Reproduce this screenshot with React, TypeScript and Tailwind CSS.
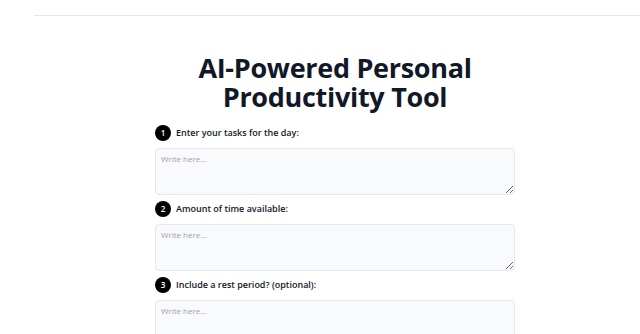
const steps = [
  "Enter your tasks for the day:",
  "Amount of time available:",
  "Include a rest period? (optional):",
];

export default function App() {
  return (
    <div
      className="min-h-screen bg-white text-[#111827]"
      style={{ fontFamily: '"Open Sans", "Noto Sans", sans-serif' }}
    >
      <header className="ml-[34px] h-[16px] border-b border-gray-200" />
      <main className="pl-[30px]">
        <div className="mx-auto w-[360px] pt-[37px]">
          <h1 className="text-center text-[27px] font-bold leading-[29px] tracking-[-0.3px] text-[#111827]">
            AI-Powered Personal
            <br />
            Productivity Tool
          </h1>
          <form className="mt-[14px] flex flex-col gap-[6px]">
            {steps.map((label, i) => (
              <div key={label} className="flex flex-col gap-[7px]">
                <div className="flex items-center gap-[5px]">
                  <span className="flex h-[16px] w-[16px] items-center justify-center rounded-full bg-black text-[8px] font-semibold text-white">
                    {i + 1}
                  </span>
                  <span className="text-[9px] font-semibold text-[#111827]">
                    {label}
                  </span>
                </div>
                <textarea
                  placeholder="Write here..."
                  className="h-[47px] w-full rounded-[4px] border border-gray-200 bg-gray-50 px-[5px] py-[4px] text-[8px] placeholder:text-gray-400 focus:outline-none"
                />
              </div>
            ))}
          </form>
        </div>
      </main>
    </div>
  );
}
